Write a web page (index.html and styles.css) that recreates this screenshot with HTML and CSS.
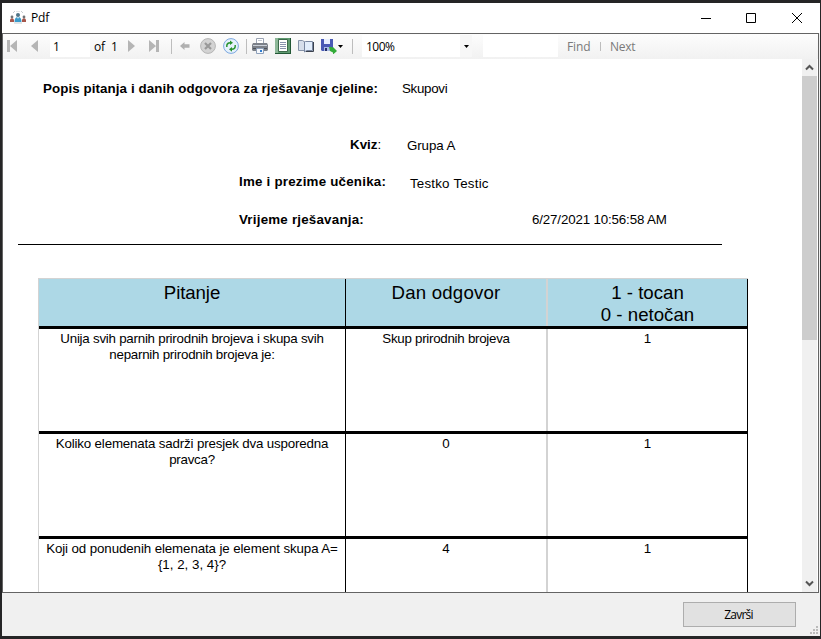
FILE: index.html
```html
<!DOCTYPE html>
<html lang="hr">
<head>
<meta charset="utf-8">
<title>Pdf</title>
<link rel="stylesheet" href="styles.css">
</head>
<body>
<div class="window">
  <header class="titlebar">
    <svg class="app-icon" width="16" height="14" viewBox="0 0 16 14"><path d="M3 2L5 0M6 0h4M11 0l2 2M4 12h8" stroke="#c8cdd0" fill="none"/><circle cx="2" cy="6" r="1.4" fill="#6f7375"/><path d="M0 11V8.500Q2 6 4 8.500V11z" fill="#a6564b"/><circle cx="14" cy="6" r="1.400" fill="#6f7375"/><path d="M12 11V8.500Q14 6 16 8.500V11z" fill="#a6564b"/><circle cx="8" cy="4" r="2" fill="#507386"/><path d="M4.500 11Q4.500 6 8 6t3.500 5z" fill="#3a9bcb"/><path d="M7 6l1 2 1-2z" fill="#e5eff4"/></svg>
    <span class="title">Pdf</span>
    <svg class="controls" width="104" height="14" viewBox="0 0 104 14" fill="none" stroke="#000"><path d="M1 7.500h10M46.500 2.500h9v9h-9zM92 2l10 10M102 2L92 12"/></svg>
  </header>
  <main class="viewer">
    <div class="toolbar">
      <svg class="first" width="10" height="12" viewBox="0 0 10 12"><path d="M0 0h3v12H0zM10 0v12L3 6z" fill="#b5b5b5"/></svg>
      <svg class="prev" width="7" height="12" viewBox="0 0 7 12"><path d="M7 0v12L0 6z" fill="#b5b5b5"/></svg>
      <span class="page">1</span>
      <span class="of">of</span><span class="total">1</span>
      <svg class="next" width="7" height="12" viewBox="0 0 7 12"><path d="M0 0v12l7-6z" fill="#b5b5b5"/></svg>
      <svg class="last" width="10" height="12" viewBox="0 0 10 12"><path d="M7 0h3v12H7zM0 0v12l7-6z" fill="#b5b5b5"/></svg>
      <i class="sep sep-a"></i>
      <svg class="back" width="10" height="8" viewBox="0 0 10 8"><path d="M0 4l4.500-4v2.300H9.500v3.400H4.500V8z" fill="#b0b0b0"/></svg>
      <svg class="stop" width="16" height="16" viewBox="0 0 16 16"><circle cx="8" cy="8" r="7.400" fill="#d3d3d3" stroke="#b5b5b5"/><path d="M5 5l6 6M11 5l-6 6" stroke="#999" stroke-width="2.200"/></svg>
      <svg class="refresh" width="16" height="16" viewBox="0 0 16 16"><circle cx="8" cy="8" r="7.400" fill="#e5f1fc" stroke="#7ba7df"/><path d="M3.800 9V7.500Q4 5 7 4.700M12.200 7v1.500q-.2 2.500-3.200 2.800" stroke="#2f9735" stroke-width="1.500" fill="none"/><path d="M7 2.500l3 2.200L7 7zM9 9v4.700l-3-2.400z" fill="#27912c"/></svg>
      <i class="sep sep-b"></i>
      <svg class="print" width="16" height="16" viewBox="0 0 16 16"><path d="M4.500 6V.5h7V6" fill="#fff" stroke="#9aa3b3"/><path d="M1 5h14l1 2v5l-1 1H1l-1-1V7z" fill="#7b8088"/><path d="M1 7.500h14" stroke="#c9cfd8"/><path d="M1 10.500h14" stroke="#4b5058"/><path d="M4.500 10.500h7v5h-7z" fill="#f5f8fc" stroke="#8ea0ba"/><path d="M6 2.500h4" stroke="#c3c8d1"/><path d="M8 12h2v2H8z" fill="#2f7dd0"/></svg>
      <svg class="layout" width="16" height="16" viewBox="0 0 16 16"><path d="M0 0h16v16H0z" fill="#5f9a70"/><path d="M0 0h3v16H0z" fill="#8db898"/><path d="M3.500 1.500h9v12h-9z" fill="#fff" stroke="#3c6a4b"/><path d="M5 4.500h6M5 6.500h6M5 8.500h6M5 10.500h6" stroke="#8992ae"/><path d="M0 15.500h16M15.500 0v16" stroke="#225735"/></svg>
      <svg class="setup" width="16" height="15" viewBox="0 0 16 15"><path d="M.5 1.500h4l3 2v8h-7z" fill="#d6deeb" stroke="#8592a8"/><path d="M6.500 3v10l2-1.500h6v-9h-7z" fill="#e2edfb" stroke="#7886a0"/><path d="M8 12.500h7.500V3" fill="none" stroke="#3a414d"/></svg>
      <svg class="save" width="16" height="15" viewBox="0 0 16 15"><path d="M0 0h12v12H1l-1-1z" fill="#4859b4"/><path d="M3 0h6v5H3z" fill="#e7efff"/><path d="M3 8h6v4H3z" fill="#a9b9e7"/><path d="M4 9h2v3H4z" fill="#263169"/><path d="M8 8h3v1l1-1 4 4-4 3.500v-2L9 12z" fill="#32ab38"/></svg>
      <svg class="caret" width="5" height="3" viewBox="0 0 5 3"><path d="M0 0h5L2.500 3z"/></svg>
      <i class="sep sep-c"></i>
      <div class="zoom"><span>100%</span><b><svg width="5" height="3" viewBox="0 0 5 3"><path d="M0 0h5L2.500 3z"/></svg></b></div>
      <span class="search"></span>
      <span class="find">Find</span><i class="sep sep-d"></i><span class="find-next">Next</span>
    </div>
    <div class="content">
      <article class="report">
        <div class="line line-topic"><b>Popis pitanja i danih odgovora za rješavanje cjeline:</b><span>Skupovi</span></div>
        <div class="line line-quiz"><b>Kviz<i>:</i></b><span>Grupa A</span></div>
        <div class="line line-name"><b>Ime i prezime učenika:</b><span>Testko Testic</span></div>
        <div class="line line-time"><b>Vrijeme rješavanja:</b><span>6/27/2021 10:56:58 AM</span></div>
        <div class="rule"></div>
        <div class="table">
          <div class="row head"><div><span class="h1">Pitanje</span></div><div><span class="h2">Dan odgovor</span></div><div><span class="h3">1 - tocan<br>0 - netočan</span></div></div>
          <div class="row"><div><span class="q1">Unija svih parnih prirodnih brojeva i skupa svih</span><br><span class="q2">neparnih prirodnih brojeva je:</span></div><div><span class="a1">Skup prirodnih brojeva</span></div><div>1</div></div>
          <div class="row"><div><span class="q3">Koliko elemenata sadrži presjek dva usporedna</span><br><span>pravca?</span></div><div>0</div><div>1</div></div>
          <div class="row"><div><span class="q4">Koji od ponudenih elemenata je element skupa A=</span><br><span class="q5">{1, 2, 3, 4}?</span></div><div>4</div><div>1</div></div>
        </div>
      </article>
      <aside class="scrollbar">
        <svg width="15" height="17" viewBox="0 0 15 17"><path d="M4 10.500L7.500 7l3.500 3.500" fill="none" stroke="#555" stroke-width="2"/></svg>
        <div class="thumb"></div>
        <svg class="down" width="15" height="17" viewBox="0 0 15 17"><path d="M4 6.500L7.500 10 11 6.500" fill="none" stroke="#555" stroke-width="2"/></svg>
      </aside>
    </div>
  </main>
  <footer class="footer">
    <button><span>Završi</span></button>
    <svg class="grip" width="9" height="9" viewBox="0 0 9 9" fill="#bbb"><path d="M6 0h2v2H6zM3 3h2v2H3zM6 3h2v2H6zM0 6h2v2H0zM3 6h2v2H3zM6 6h2v2H6z"/></svg>
  </footer>
</div>
</body>
</html>
```
FILE: styles.css
```css
* { box-sizing: border-box; }
body {
  margin: 0;
  width: 821px;
  height: 639px;
  padding: 3px 1px 3px 2px;
  overflow: hidden;
  background: #252526;
  font-family: "Liberation Sans", sans-serif;
  color: #000;
}
svg { display: block; flex: none; }
.window { height: 633px; background: #f0f0f0; display: flex; flex-direction: column; }
.titlebar {
  height: 30px;
  display: flex;
  align-items: center;
  background: #fff;
  padding: 0 16px 1px 8px;
  font: 12px "Open Sans", sans-serif;
}
.title { margin-left: 5px; letter-spacing: -.2px; }
.controls { margin-left: auto; }
.viewer {
  height: 560px;
  width: 817px;
  border: 1px solid #646464;
  background: #fff;
}
.toolbar {
  height: 25px;
  display: flex;
  align-items: center;
  padding: 0 0 1px 4px;
  background: linear-gradient(#fdfdfd, #f1f1f1);
  font: 12px "Open Sans", sans-serif;
  white-space: nowrap;
}
.toolbar span { flex: none; }
.sep { flex: none; width: 1px; height: 15px; background: #bdbdbd; }
.prev { margin-left: 14px; }
.page { width: 40px; height: 21px; line-height: 21px; margin-left: 12px; padding-left: 3px; background: #fff; }
.of { width: 17px; margin-left: 4px; letter-spacing: -.3px; }
.total { width: 13px; }
.next { margin-left: 4px; }
.last { margin-left: 14px; }
.sep-a { margin-left: 12px; }
.back { margin-left: 8px; }
.stop { margin-left: 10px; }
.refresh { margin-left: 7px; }
.sep-b { margin-left: 7px; }
.print { margin-left: 5px; }
.layout, .setup, .save { margin-left: 7px; }
.caret { margin-left: 1px; }
.sep-c { margin-left: 9px; }
.zoom { flex: none; display: flex; justify-content: space-between; width: 110px; height: 22px; line-height: 23px; margin-left: 9px; padding-left: 4px; background: #fff; }
.zoom span { letter-spacing: -.5px; }
.zoom b { width: 12px; display: flex; align-items: center; justify-content: center; background: #f7f7f7; }
.search { width: 75px; height: 22px; margin-left: 11px; background: #fff; }
.find { width: 24px; margin-left: 9px; color: #7a7a7a; letter-spacing: -.15px; }
.sep-d { height: 9px; margin-left: 9px; }
.find-next { margin-left: 9px; color: #7a7a7a; letter-spacing: -.25px; }
.content { display: flex; height: 533px; overflow: hidden; }
.report { width: 799px; padding: 22px 0 0 15px; font-size: 13.333px; line-height: 16px; }
.line { display: flex; height: 16px; white-space: nowrap; }
.line b { letter-spacing: .22px; }
.line b i { font-style: normal; font-weight: 400; }
.line-topic { padding-left: 25px; }
.line-topic b { width: 359px; letter-spacing: .09px; }
.line-topic span { letter-spacing: -.3px; }
.line-quiz { padding-left: 332px; margin-top: 40px; }
.line-quiz b { width: 57px; letter-spacing: 0; }
.line-quiz span { padding-top: 1px; letter-spacing: -.1px; }
.line-name { padding-left: 221px; margin-top: 21px; }
.line-name b { width: 171px; }
.line-name span { padding-top: 2px; letter-spacing: .2px; }
.line-time { padding-left: 221px; margin-top: 22px; }
.line-time b { width: 293px; }
.line-time span { letter-spacing: -.15px; }
.rule { width: 704px; height: 1px; margin-top: 16px; background: #000; }
.table { width: 710px; margin: 33px 0 0 20px; border-left: 1px solid #d3d3d3; border-top: 1px solid #d3d3d3; }
.row { display: grid; grid-template-columns: 307px 202px 200px; height: 105px; border-bottom: 3px solid #000; text-align: center; white-space: nowrap; }
.row > div { padding-top: 2px; border-right: 1px solid #000; }
.row > div:nth-child(2) { border-right: 2px solid #d3d3d3; }
.row span { letter-spacing: -.24px; }
.row .h1 { letter-spacing: -.1px; }
.row .h2 { letter-spacing: .18px; }
.row .h3 { letter-spacing: 0; }
.row .a1 { letter-spacing: -.27px; }
.row .q3 { letter-spacing: -.17px; }
.row .q4 { letter-spacing: -.11px; }
.row .q5 { letter-spacing: 0; }
.row.head { height: 50px; background: #add8e6; font-size: 18.667px; line-height: 22px; }
.row.head > div { padding-top: 3px; }
.scrollbar { width: 16px; background: #f0f0f0; display: flex; flex-direction: column; border-right: 1px solid #fff; }
.thumb { height: 264px; background: #cdcdcd; }
.down { margin-top: auto; }
.footer { height: 43px; display: flex; align-items: center; justify-content: flex-end; padding-right: 1px; }
button { width: 113px; height: 25px; padding: 0; margin-right: 14px; border: 1px solid #adadad; border-radius: 0; background: #e1e1e1; color: #000; font: 12px "Open Sans", sans-serif; letter-spacing: -.8px; }
button span { margin-right: 2px; }
.grip { align-self: flex-end; margin-bottom: 1px; }
```
